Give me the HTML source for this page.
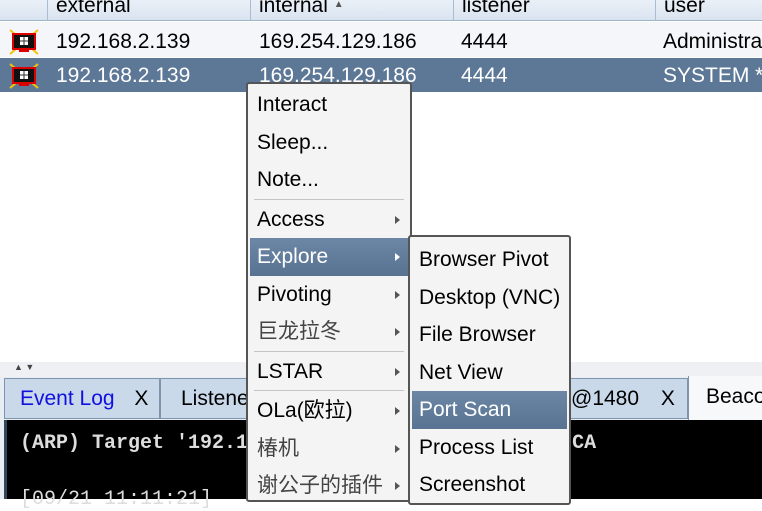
<!DOCTYPE html>
<html><head><meta charset="utf-8"><style>
*{margin:0;padding:0;box-sizing:border-box}
body{width:762px;height:499px;overflow:hidden;background:#fff;position:relative;font-family:"Liberation Sans","Noto Sans CJK SC",sans-serif;font-size:21px;color:#000}
.a{position:absolute;white-space:nowrap}
.hdr{left:0;top:0;width:762px;height:21px;background:linear-gradient(#eaf0f7,#d9e4f0);border-bottom:1px solid #9fb3c8}
.hc{top:-6px;height:27px;border-left:1px solid #a9bdd2;padding-left:8px}
.row{left:0;width:762px;height:35px}
.mi{height:37.5px;line-height:37.5px;padding-left:7px;position:relative}
.arr{position:absolute;right:8px;top:15px;width:0;height:0;border-top:4px solid transparent;border-bottom:4px solid transparent;border-left:5px solid #555}
.hl{background:linear-gradient(#6c87a6,#587392);color:#fff}
.sep{height:2px;border-top:1px solid #c4c4c4;margin:0 4px}
</style></head><body>
<div class="a hdr"></div>
<div class="a hc" style="left:47px;width:203px">external</div>
<div class="a hc" style="left:250px;width:203px">internal <span style="font-size:10px;vertical-align:5px;color:#555">▲</span></div>
<div class="a hc" style="left:453px;width:202px">listener</div>
<div class="a hc" style="left:655px;width:107px">user</div>
<div class="a row" style="top:22px;background:#f5f6fa"></div>
<div class="a row" style="top:58px;height:34px;background:#5d7896"></div>
<svg class="a" style="left:7px;top:28px" width="34" height="28" viewBox="0 0 32 28"><path d="M2 2l6 5M30 2l-6 5M2 26l6-5M30 26l-6-5" stroke="#f4c400" stroke-width="2"/><rect x="5" y="6" width="22" height="15" fill="#111" stroke="#d00" stroke-width="2"/><rect x="12" y="9" width="8" height="8" fill="#fff"/><path d="M16 9v8M12 13h8" stroke="#333"/><rect x="11" y="21" width="10" height="3" fill="#d00"/></svg>
<svg class="a" style="left:7px;top:62px" width="34" height="28" viewBox="0 0 32 28"><path d="M2 2l6 5M30 2l-6 5M2 26l6-5M30 26l-6-5" stroke="#f4c400" stroke-width="2"/><rect x="5" y="6" width="22" height="15" fill="#111" stroke="#d00" stroke-width="2"/><rect x="12" y="9" width="8" height="8" fill="#fff"/><path d="M16 9v8M12 13h8" stroke="#333"/><rect x="11" y="21" width="10" height="3" fill="#d00"/></svg>
<div class="a" style="left:56px;top:30px">192.168.2.139</div>
<div class="a" style="left:259px;top:30px">169.254.129.186</div>
<div class="a" style="left:461px;top:30px">4444</div>
<div class="a" style="left:663px;top:30px">Administrat</div>
<div class="a" style="left:56px;top:64px;color:#fff">192.168.2.139</div>
<div class="a" style="left:259px;top:64px;color:#fff">169.254.129.186</div>
<div class="a" style="left:461px;top:64px;color:#fff">4444</div>
<div class="a" style="left:663px;top:64px;color:#fff">SYSTEM *</div>

<div class="a" style="left:0;top:362px;width:762px;height:16px;background:#eef0f4;font-size:9px;color:#444;padding-left:14px">▲ ▼</div>
<div class="a" style="left:0;top:377px;width:762px;height:122px;background:#e8edf3"></div>
<div class="a" style="left:4px;top:378px;width:156px;height:41px;background:#c9d9ea;border:1px solid #7f95ad;color:#1010e0;line-height:40px;padding-left:15px">Event Log <span style="color:#000;margin-left:14px">X</span></div>
<div class="a" style="left:160px;top:378px;width:255px;height:41px;background:#c9d9ea;border:1px solid #7f95ad;line-height:40px;padding-left:20px">Listene</div>
<div class="a" style="left:560px;top:378px;width:128px;height:41px;background:#c9d9ea;border:1px solid #7f95ad;line-height:40px;padding-left:10px">@1480 <span style="margin-left:16px">X</span></div>
<div class="a" style="left:688px;top:376px;width:74px;height:44px;background:#f7f8fa;border-left:1px solid #7f95ad;line-height:42px;padding-left:17px">Beaco</div>
<div class="a" style="left:4px;top:420px;width:758px;height:79px;background:#000;border-left:3px solid #35465a"></div>
<div class="a" style="left:20px;top:432px;color:#ddd;font-family:'Liberation Mono',monospace;font-weight:bold;font-size:20px">(ARP) Target '192.168.152.254' 00-50-56-E7-88-CA</div>
<div class="a" style="left:20px;top:488px;color:#ddd;font-family:'Liberation Mono',monospace;font-size:20px">[09/21 11:11:21]</div>

<div class="a" style="left:246px;top:82px;width:166px;height:420px;background:#f4f4f4;border:2px solid #555;border-radius:3px;padding:2px 2px">
<div class="mi">Interact</div><div class="mi">Sleep...</div><div class="mi">Note...</div><div class="sep"></div>
<div class="mi">Access<span class="arr"></span></div>
<div class="mi hl">Explore<span class="arr" style="border-left-color:#fff"></span></div>
<div class="mi">Pivoting<span class="arr"></span></div>
<div class="mi" style="color:#444">巨龙拉冬<span class="arr"></span></div><div class="sep"></div>
<div class="mi">LSTAR<span class="arr"></span></div><div class="sep"></div>
<div class="mi">OLa(欧拉)<span class="arr"></span></div>
<div class="mi" style="color:#444">椿机<span class="arr"></span></div>
<div class="mi" style="color:#444">谢公子的插件<span class="arr"></span></div>
</div>
<div class="a" style="left:408px;top:235px;width:163px;height:270px;background:#f4f4f4;border:2px solid #555;border-radius:3px;padding:4px 2px">
<div class="mi">Browser Pivot</div><div class="mi">Desktop (VNC)</div><div class="mi">File Browser</div><div class="mi">Net View</div>
<div class="mi hl">Port Scan</div><div class="mi">Process List</div><div class="mi">Screenshot</div>
</div>
</body></html>
